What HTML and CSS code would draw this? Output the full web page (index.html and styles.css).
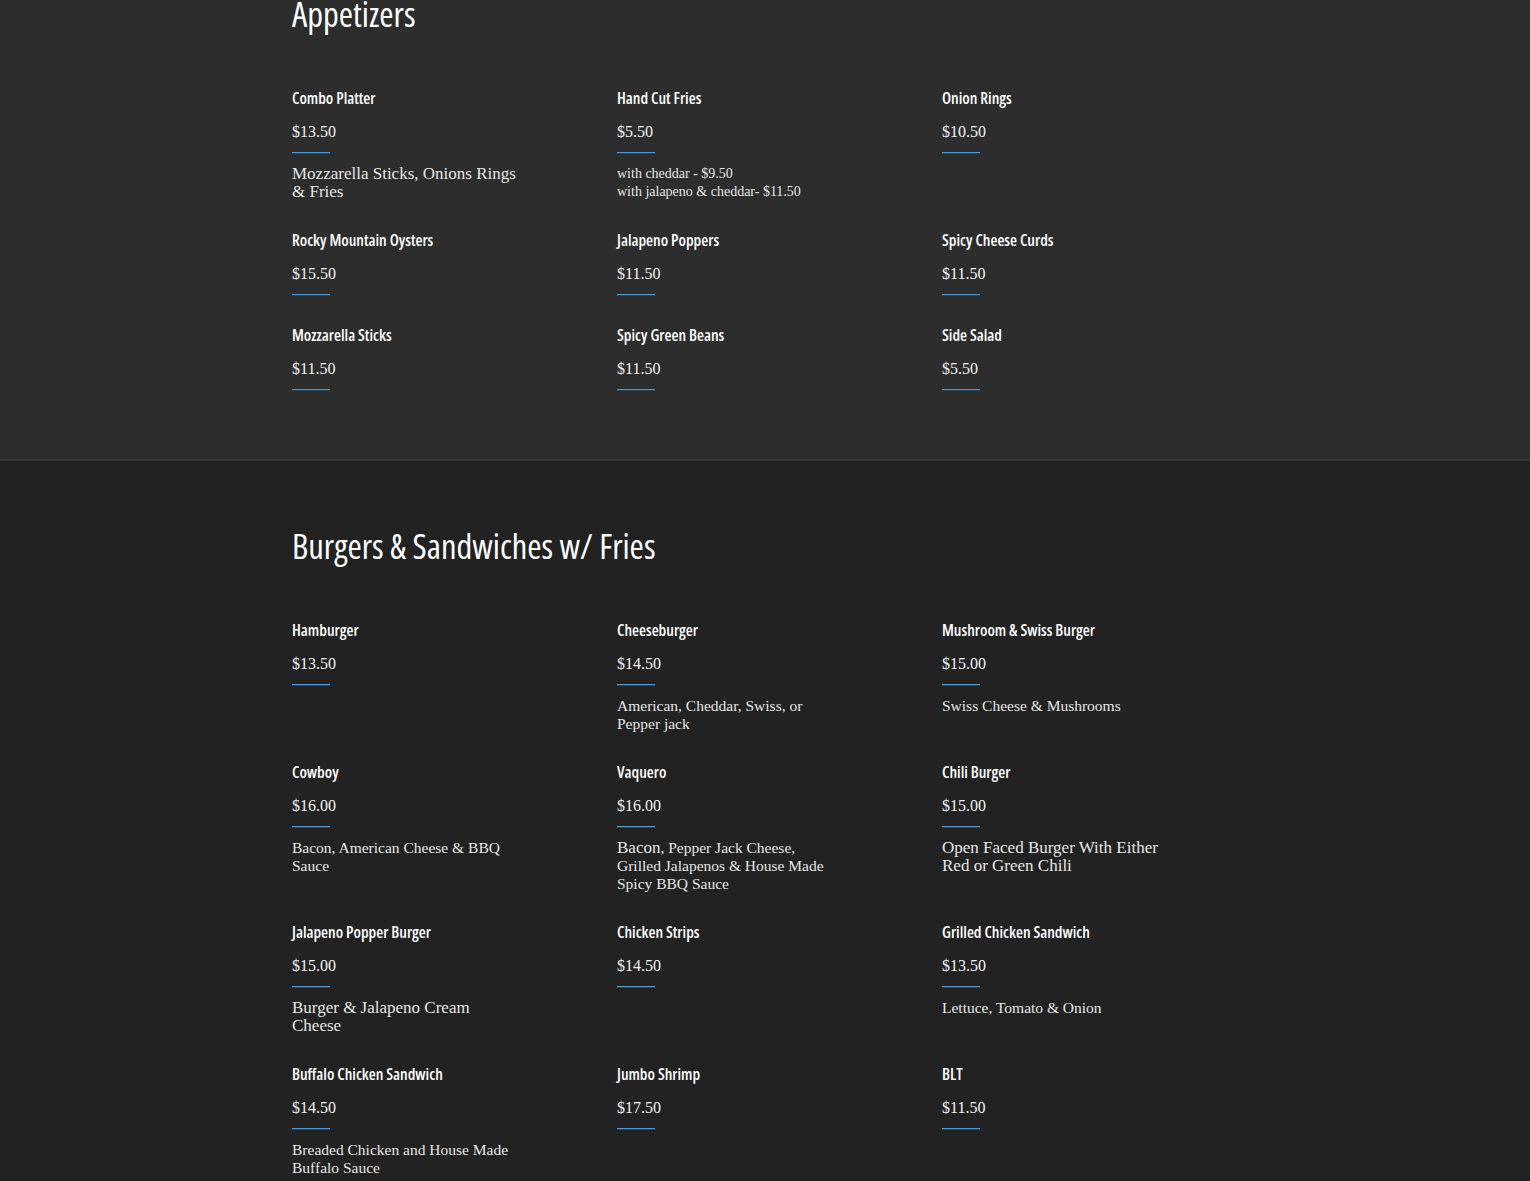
FILE: index.html
```html
<!DOCTYPE html>
<html lang="en">
<head>
<meta charset="utf-8">
<title>Menu</title>
<link rel="stylesheet" href="styles.css">
</head>
<body>
<main class="menu">
  <section class="menu-section menu-section--light menu-section--first">
    <div class="container">
      <h2 class="section-title">Appetizers</h2>
      <div class="items">
        <div class="item">
          <h3 class="item-name">Combo Platter</h3>
          <div class="item-price">$13.50</div>
          <div class="item-rule"></div>
          <p class="item-desc desc-lg">Mozzarella Sticks, Onions Rings<br>&amp; Fries</p>
        </div>
        <div class="item">
          <h3 class="item-name">Hand Cut Fries</h3>
          <div class="item-price">$5.50</div>
          <div class="item-rule"></div>
          <p class="item-desc desc-sm">with cheddar - $9.50<br>with jalapeno &amp; cheddar- $11.50</p>
        </div>
        <div class="item">
          <h3 class="item-name">Onion Rings</h3>
          <div class="item-price">$10.50</div>
          <div class="item-rule"></div>
        </div>
        <div class="item">
          <h3 class="item-name">Rocky Mountain Oysters</h3>
          <div class="item-price">$15.50</div>
          <div class="item-rule"></div>
        </div>
        <div class="item">
          <h3 class="item-name">Jalapeno Poppers</h3>
          <div class="item-price">$11.50</div>
          <div class="item-rule"></div>
        </div>
        <div class="item">
          <h3 class="item-name">Spicy Cheese Curds</h3>
          <div class="item-price">$11.50</div>
          <div class="item-rule"></div>
        </div>
        <div class="item">
          <h3 class="item-name">Mozzarella Sticks</h3>
          <div class="item-price">$11.50</div>
          <div class="item-rule"></div>
        </div>
        <div class="item">
          <h3 class="item-name">Spicy Green Beans</h3>
          <div class="item-price">$11.50</div>
          <div class="item-rule"></div>
        </div>
        <div class="item">
          <h3 class="item-name">Side Salad</h3>
          <div class="item-price">$5.50</div>
          <div class="item-rule"></div>
        </div>
      </div>
    </div>
  </section>

  <section class="menu-section menu-section--dark">
    <div class="container">
      <h2 class="section-title">Burgers &amp; Sandwiches w/ Fries</h2>
      <div class="items">
        <div class="item">
          <h3 class="item-name">Hamburger</h3>
          <div class="item-price">$13.50</div>
          <div class="item-rule"></div>
        </div>
        <div class="item">
          <h3 class="item-name">Cheeseburger</h3>
          <div class="item-price">$14.50</div>
          <div class="item-rule"></div>
          <p class="item-desc desc-md">American, Cheddar, Swiss, or<br>Pepper jack</p>
        </div>
        <div class="item">
          <h3 class="item-name">Mushroom &amp; Swiss Burger</h3>
          <div class="item-price">$15.00</div>
          <div class="item-rule"></div>
          <p class="item-desc desc-md">Swiss Cheese &amp; Mushrooms</p>
        </div>
        <div class="item">
          <h3 class="item-name">Cowboy</h3>
          <div class="item-price">$16.00</div>
          <div class="item-rule"></div>
          <p class="item-desc desc-md">Bacon, American Cheese &amp; BBQ<br>Sauce</p>
        </div>
        <div class="item">
          <h3 class="item-name">Vaquero</h3>
          <div class="item-price">$16.00</div>
          <div class="item-rule"></div>
          <p class="item-desc desc-md"><span class="desc-lg">Bacon</span>, Pepper Jack Cheese,<br>Grilled Jalapenos &amp; House Made<br>Spicy BBQ Sauce</p>
        </div>
        <div class="item">
          <h3 class="item-name">Chili Burger</h3>
          <div class="item-price">$15.00</div>
          <div class="item-rule"></div>
          <p class="item-desc desc-lg">Open Faced Burger With Either<br>Red or Green Chili</p>
        </div>
        <div class="item">
          <h3 class="item-name">Jalapeno Popper Burger</h3>
          <div class="item-price">$15.00</div>
          <div class="item-rule"></div>
          <p class="item-desc desc-lg">Burger &amp; Jalapeno Cream<br>Cheese</p>
        </div>
        <div class="item">
          <h3 class="item-name">Chicken Strips</h3>
          <div class="item-price">$14.50</div>
          <div class="item-rule"></div>
        </div>
        <div class="item">
          <h3 class="item-name">Grilled Chicken Sandwich</h3>
          <div class="item-price">$13.50</div>
          <div class="item-rule"></div>
          <p class="item-desc desc-md">Lettuce, Tomato &amp; Onion</p>
        </div>
        <div class="item">
          <h3 class="item-name">Buffalo Chicken Sandwich</h3>
          <div class="item-price">$14.50</div>
          <div class="item-rule"></div>
          <p class="item-desc desc-md">Breaded Chicken and House Made<br>Buffalo Sauce</p>
        </div>
        <div class="item">
          <h3 class="item-name">Jumbo Shrimp</h3>
          <div class="item-price">$17.50</div>
          <div class="item-rule"></div>
        </div>
        <div class="item">
          <h3 class="item-name">BLT</h3>
          <div class="item-price">$11.50</div>
          <div class="item-rule"></div>
        </div>
      </div>
    </div>
  </section>
</main>
</body>
</html>
```
FILE: styles.css
```css
* { box-sizing: border-box; }

html, body {
  margin: 0;
  padding: 0;
}

body {
  background: #222222;
  color: #ececec;
  font-family: "Liberation Serif", "Times New Roman", serif;
  overflow: hidden;
}

.menu-section {
  padding: 63px 0 39px;
}

.menu-section--light {
  background: #2d2d2d;
  border-bottom: 2px solid #353535;
}

.menu-section--dark {
  background: #222222;
}

.menu-section--first {
  margin-top: -71px;
}

.container {
  width: 946px;
  margin: 0 auto;
}

.section-title {
  margin: 0 0 52px;
  font-family: "Open Sans", "DejaVu Sans Condensed", sans-serif;
  font-stretch: 75%;
  font-weight: 500;
  font-size: 34.5px;
  line-height: 44px;
  color: #ffffff;
}

.items {
  display: grid;
  grid-template-columns: repeat(3, 296px);
  column-gap: 29px;
  row-gap: 0;
  align-items: start;
}

.item {
  padding-bottom: 29px;
}

.item-name {
  margin: 0;
  font-family: "Open Sans", "DejaVu Sans Condensed", sans-serif;
  font-stretch: 75%;
  font-weight: 550;
  font-size: 16px;
  line-height: 20px;
  color: #ffffff;
}

.item-price {
  margin-top: 14px;
  font-size: 16px;
  line-height: 20px;
  color: #f2f2f2;
}

.item-rule {
  margin-top: 10px;
  width: 38px;
  height: 2px;
  background: linear-gradient(to bottom, #4f97cc 0, #4f97cc 50%, #1d4764 50%, #1d4764 100%);
}

.item-desc {
  margin: 11px 0 0;
  max-width: 280px;
  line-height: 18px;
  color: #e6e6e6;
  white-space: nowrap;
}

.desc-lg { font-size: 17px; }
.desc-md { font-size: 15.5px; }
.desc-sm { font-size: 14px; }
```
